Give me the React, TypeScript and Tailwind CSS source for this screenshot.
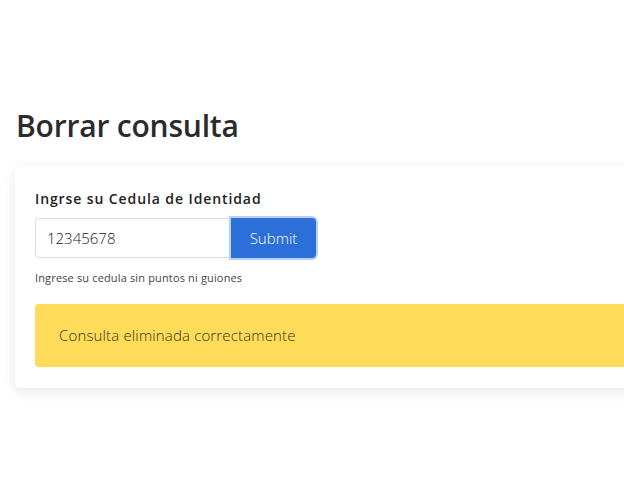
export default function App() {
  return (
    <div className="h-[481px] w-[624px] overflow-hidden bg-white font-['Open_Sans',sans-serif] text-[#333]">
      <div className="pt-[106px] pl-[15px]">
        <h1 className="pl-px text-[30px] font-semibold leading-[40px] tracking-[-0.2px] text-[#2b2b2b]">Borrar consulta</h1>
        <div className="mt-[20px] w-[720px] rounded-md bg-white px-5 pt-[22px] pb-[21px] shadow-[0_4px_14px_rgba(0,0,0,0.09)]">
          <label className="block text-[14px] font-semibold tracking-[0.9px] text-[#222]">Ingrse su Cedula de Identidad</label>
          <div className="mt-[9px] flex">
            <input
              defaultValue="12345678"
              className="h-10 w-[196px] rounded-l border border-[#dcdcdc] px-[11px] text-[15px] font-light text-[#222] outline-none"
            />
            <button
              type="button"
              className="h-10 w-[85px] rounded-r bg-[#2c6fd8] text-[15px] font-light text-white ring-2 ring-[#b9d1f5]"
            >
              Submit
            </button>
          </div>
          <p className="mt-[12px] text-[11px] tracking-[0.15px] text-[#444]">Ingrese su cedula sin puntos ni guiones</p>
          <div className="mt-[17px] flex h-[63px] items-center rounded bg-[#fedc5a] px-6 text-[15px] font-light tracking-[0.15px] text-[#3d320c]">
            Consulta eliminada correctamente
          </div>
        </div>
      </div>
    </div>
  );
}
